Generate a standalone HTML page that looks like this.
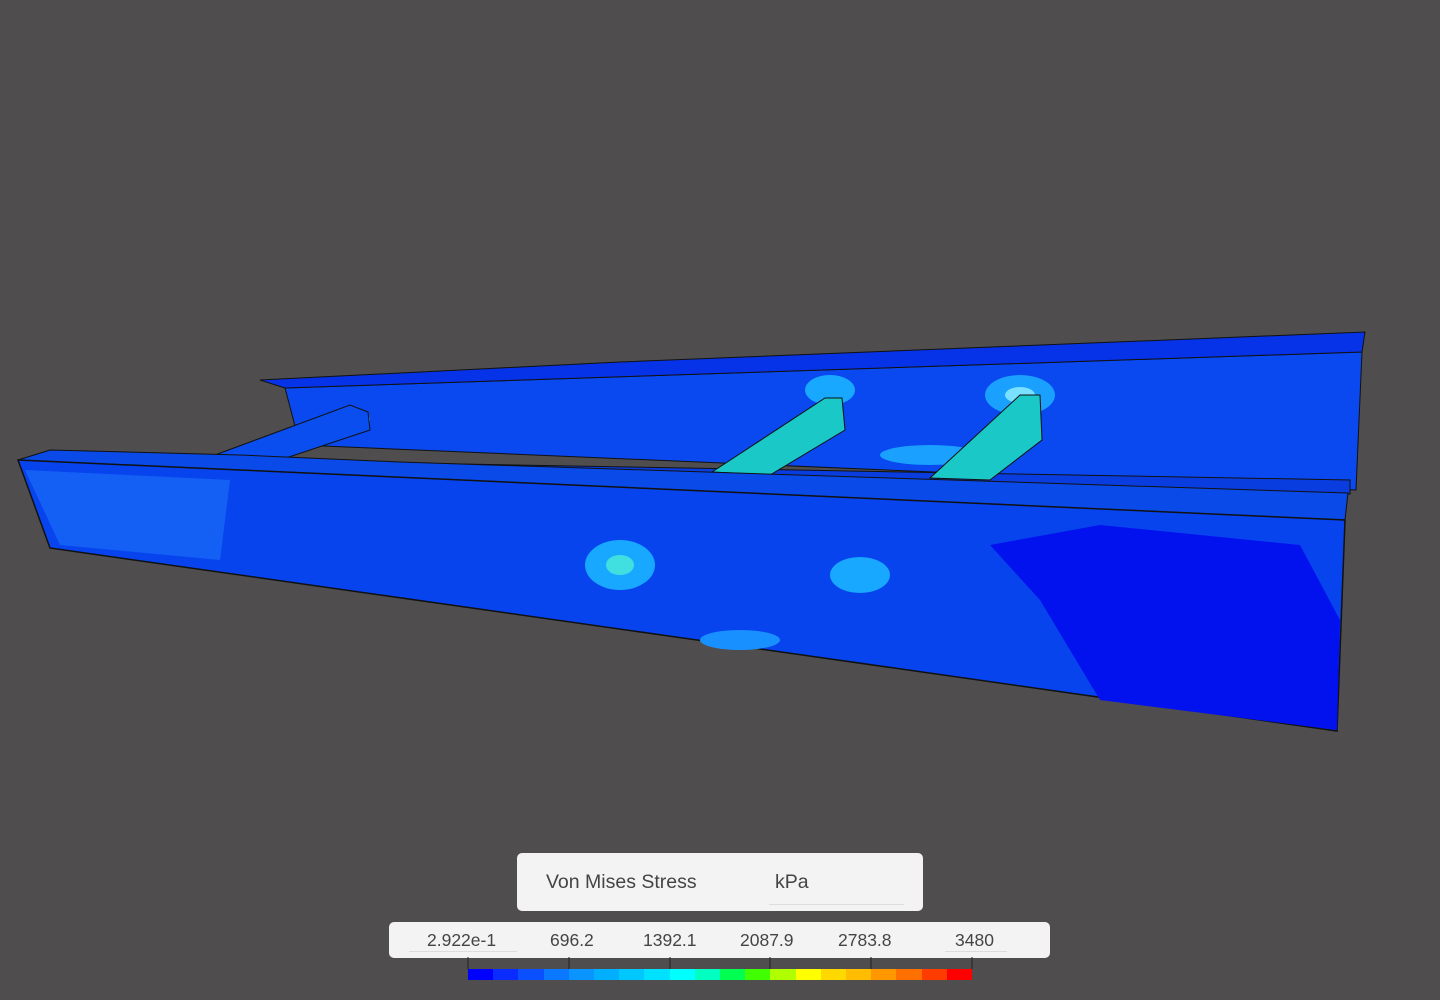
<!DOCTYPE html>
<html><head><meta charset="utf-8"><style>
body{margin:0;width:1440px;height:1000px;background:#4f4d4d;overflow:hidden;font-family:"Liberation Sans",sans-serif;position:relative}
.box{position:absolute;background:#f3f3f3;border-radius:5px;color:#444}
.bar{position:absolute;left:468px;top:969px;height:11px;width:504px;display:flex}
.bar div{flex:1}
</style></head><body>
<svg width="1440" height="1000" style="position:absolute;left:0;top:0">
<polygon points="285,388 1362,352 1356,490 300,445" fill="#0a48f0" stroke="#111" stroke-width="1"/>
<polygon points="260,380 500,368 620,362 1365,332 1362,352 285,388" fill="#0633e8" stroke="#111" stroke-width="1"/>
<ellipse cx="830" cy="390" rx="25" ry="15" fill="#18a8ff"/>
<ellipse cx="1020" cy="395" rx="35" ry="20" fill="#1aa0ff"/>
<ellipse cx="1020" cy="395" rx="15" ry="8" fill="#7ae0ff"/>
<ellipse cx="930" cy="455" rx="50" ry="10" fill="#1aa0ff"/>
<ellipse cx="350" cy="420" rx="20" ry="12" fill="#18a8ff"/>
<polygon points="240,460 1350,480 1350,494 240,470" fill="#0a3de0" stroke="#111"/>
<polygon points="215,455 350,405 368,412 370,430 265,465" fill="#0a4ef0" stroke="#111"/>
<polygon points="712,472 825,398 842,398 845,430 770,475" fill="#1bc8c8" stroke="#111"/>
<polygon points="930,478 1020,395 1040,395 1042,440 990,480" fill="#1bc8c8" stroke="#111"/>
<polygon points="18,460 50,450 240,455 400,462 1348,493 1345,520 240,470" fill="#0a4ae8" stroke="#111"/>
<polygon points="18,460 240,470 1345,520 1337,731 50,548" fill="#0744ee" stroke="#111" stroke-width="1.5"/>
<polygon points="990,545 1100,525 1300,545 1340,620 1337,730 1100,700 1040,600" fill="#0212ef"/>
<polygon points="25,470 230,480 220,560 60,545" fill="#1a6cf8" opacity="0.7"/>
<ellipse cx="620" cy="565" rx="35" ry="25" fill="#18a8ff"/>
<ellipse cx="620" cy="565" rx="14" ry="10" fill="#40e0e0"/>
<ellipse cx="860" cy="575" rx="30" ry="18" fill="#18a8ff"/>
<ellipse cx="740" cy="640" rx="40" ry="10" fill="#1890ff"/>
</svg>
<div class="box" style="left:517px;top:853px;width:406px;height:58px">
<span style="position:absolute;left:29px;top:18px;font-size:19.5px">Von Mises Stress</span>
<span style="position:absolute;left:258px;top:18px;font-size:19.5px">kPa</span>
<div style="position:absolute;left:252px;top:51px;width:135px;height:1px;background:#ddd"></div>
</div>
<div class="box" style="left:389px;top:922px;width:661px;height:36px;font-size:17.5px">
<span style="position:absolute;left:38px;top:8px">2.922e-1</span>
<span style="position:absolute;left:161px;top:8px">696.2</span>
<span style="position:absolute;left:254px;top:8px">1392.1</span>
<span style="position:absolute;left:351px;top:8px">2087.9</span>
<span style="position:absolute;left:449px;top:8px">2783.8</span>
<span style="position:absolute;left:566px;top:8px">3480</span>
<div style="position:absolute;left:20px;top:29px;width:108px;height:1px;background:#ddd"></div>
<div style="position:absolute;left:556px;top:29px;width:62px;height:1px;background:#ddd"></div>
</div>
<svg width="1440" height="1000" style="position:absolute;left:0;top:0">
<g stroke="#222" stroke-width="1">
<line x1="468" y1="957" x2="468" y2="969"/><line x1="569" y1="957" x2="569" y2="969"/><line x1="670" y1="957" x2="670" y2="969"/><line x1="770" y1="957" x2="770" y2="969"/><line x1="871" y1="957" x2="871" y2="969"/><line x1="972" y1="957" x2="972" y2="969"/>
</g></svg>
<div class="bar">
<div style="background:#0000ff"></div><div style="background:#0a2cff"></div><div style="background:#0a50ff"></div><div style="background:#0a78ff"></div><div style="background:#0a94ff"></div><div style="background:#00b0ff"></div><div style="background:#00c8ff"></div><div style="background:#00e0ff"></div><div style="background:#00ffff"></div><div style="background:#00ffc0"></div><div style="background:#00ff50"></div><div style="background:#40ff00"></div><div style="background:#b0ff00"></div><div style="background:#ffff00"></div><div style="background:#ffd800"></div><div style="background:#ffbc00"></div><div style="background:#ff9800"></div><div style="background:#ff7000"></div><div style="background:#ff3c00"></div><div style="background:#ff0000"></div>
</div>
</body></html>
